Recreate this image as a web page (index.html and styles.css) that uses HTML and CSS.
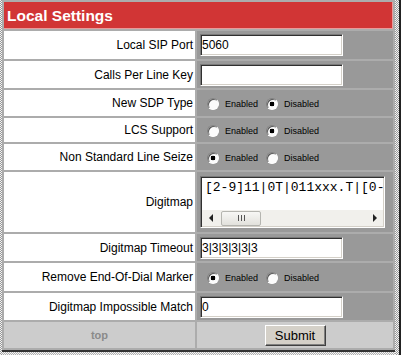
FILE: index.html
```html
<!DOCTYPE html>
<html>
<head>
<meta charset="utf-8">
<title>Local Settings</title>
<link rel="stylesheet" href="styles.css">
</head>
<body>
<div class="frame">
  <div class="edge-l"></div>
  <div class="main">
    <table class="settings">
      <colgroup><col class="c-lbl"><col class="c-val"></colgroup>
      <tr class="h27"><th colspan="2" class="head">Local Settings</th></tr>
      <tr class="h28"><td class="lbl">Local SIP Port</td><td class="val"><input class="txt" type="text" value="5060"></td></tr>
      <tr class="h27"><td class="lbl">Calls Per Line Key</td><td class="val"><input class="txt" type="text" value=""></td></tr>
      <tr class="h26"><td class="lbl">New SDP Type</td><td class="val"><label class="opt"><input class="rb" type="radio" name="sdp">Enabled</label><label class="opt"><input class="rb" type="radio" name="sdp" checked>Disabled</label></td></tr>
      <tr class="h24"><td class="lbl">LCS Support</td><td class="val"><label class="opt"><input class="rb" type="radio" name="lcs">Enabled</label><label class="opt"><input class="rb" type="radio" name="lcs" checked>Disabled</label></td></tr>
      <tr class="h26"><td class="lbl">Non Standard Line Seize</td><td class="val"><label class="opt"><input class="rb" type="radio" name="nsl" checked>Enabled</label><label class="opt"><input class="rb" type="radio" name="nsl">Disabled</label></td></tr>
      <tr class="h60"><td class="lbl">Digitmap</td><td class="val">
        <div class="ta">
          <div class="ta-text">[2-9]11|0T|011xxx.T|[0-</div>
          <div class="sb">
            <span class="sb-btn"><span class="tri-l"></span></span>
            <span class="sb-thumb"><span class="grip"></span><span class="grip"></span><span class="grip"></span></span>
            <span class="sb-track"></span>
            <span class="sb-btn"><span class="tri-r"></span></span>
          </div>
        </div>
      </td></tr>
      <tr class="h27"><td class="lbl">Digitmap Timeout</td><td class="val"><input class="txt" type="text" value="3|3|3|3|3|3"></td></tr>
      <tr class="h28"><td class="lbl">Remove End-Of-Dial Marker</td><td class="val"><label class="opt"><input class="rb" type="radio" name="eod" checked>Enabled</label><label class="opt"><input class="rb" type="radio" name="eod">Disabled</label></td></tr>
      <tr class="h27"><td class="lbl">Digitmap Impossible Match</td><td class="val"><input class="txt" type="text" value="0"></td></tr>
      <tr class="h26 foot"><td class="top">top</td><td class="val center"><button class="btn" type="button">Submit</button></td></tr>
    </table>
    <div class="foot-line"></div>
  </div>
  <div class="edge-r"></div>
  <div class="edge-k"></div>
</div>
</body>
</html>
```
FILE: styles.css
```css
html, body {
  margin: 0;
  padding: 0;
  background: #fff;
}
body {
  font-family: "Liberation Sans", Arial, sans-serif;
  font-size: 12px;
  color: #000;
}
.frame {
  display: flex;
  width: 402px;
  height: 355px;
  overflow: hidden;
}
.edge-l {
  width: 2px;
  background: repeating-conic-gradient(#9a9a9a 0 25%, #f4f4f4 0 50%) 0 0 / 2px 2px;
}
.edge-r {
  width: 4px;
  background: repeating-conic-gradient(#9a9a9a 0 25%, #f4f4f4 0 50%) 0 0 / 2px 2px;
}
.edge-k {
  width: 2px;
  background: #222;
}
.main {
  width: 393px;
  background: repeating-conic-gradient(#b0b0b0 0 25%, #f4f4f4 0 50%) 0 0 / 2px 2px;
}
.settings {
  width: 393px;
  table-layout: fixed;
  border-collapse: separate;
  border-spacing: 2px;
  background: #acacac;
}
.c-lbl { width: 191px; }
.c-val { width: 196px; }
.settings td, .settings th {
  padding: 0;
}
.h24 > td, .h24 > th { height: 24px; }
.h26 > td, .h26 > th { height: 26px; }
.h27 > td, .h27 > th { height: 27px; }
.h28 > td, .h28 > th { height: 28px; }
.h60 > td, .h60 > th { height: 60px; }
.head {
  background: #d13535;
  color: #fff;
  font-weight: bold;
  font-size: 15.5px;
  text-align: left;
  padding-left: 3px !important;
  box-shadow: inset 0 -1px 0 #e99a9a, inset -1px 0 0 #e99a9a;
}
.lbl {
  background: #fff;
  text-align: right;
  padding-right: 2px !important;
  white-space: nowrap;
  vertical-align: middle;
}
.val {
  background: #999999;
  padding-left: 3px !important;
  vertical-align: middle;
}
.center {
  text-align: center;
  padding-left: 0 !important;
}
.foot > td {
  background: #cccccc;
}
.top {
  text-align: center;
  font-weight: bold;
  font-size: 11px;
  color: #8a8a8a;
}
.foot-line {
  height: 2px;
  background: #333;
}
.txt {
  box-sizing: border-box;
  width: 143px;
  height: 22px;
  margin: 0;
  padding: 0 1px;
  font-family: "Liberation Sans", Arial, sans-serif;
  font-size: 12px;
  color: #000;
  background: #fff;
  border: 1px solid;
  border-color: #7a7a7a #ffffff #ffffff #7a7a7a;
  box-shadow: inset 1px 1px 0 #303030, inset -1px -1px 0 #d4d0c8;
  outline: none;
  vertical-align: middle;
}
.opt {
  display: inline-flex;
  align-items: center;
  font-size: 9px;
  color: #000;
  margin-left: 7px;
  margin-right: 8px;
  vertical-align: middle;
}
.opt + .opt {
  margin-left: 0;
}
.rb {
  appearance: none;
  -webkit-appearance: none;
  box-sizing: border-box;
  width: 12px;
  height: 12px;
  margin: 0 6px 0 0;
  border-radius: 50%;
  border: 1px solid;
  border-color: #808080 #ffffff #ffffff #808080;
  background: #fcfcfc;
  box-shadow: inset 1px 1px 0 #5a5a5a;
}
.rb:checked {
  background: radial-gradient(circle at 50% 50%, #000 0 2.2px, #fcfcfc 2.6px);
}
.ta {
  box-sizing: border-box;
  width: 185px;
  height: 52px;
  display: flex;
  flex-direction: column;
  background: #fff;
  border: 1px solid;
  border-color: #7a7a7a #ffffff #ffffff #7a7a7a;
  box-shadow: inset 1px 1px 0 #303030, inset -1px -1px 0 #d4d0c8;
  padding: 1px;
}
.ta-text {
  flex: 1;
  font-family: "Liberation Mono", "Courier New", monospace;
  font-size: 13px;
  line-height: 15px;
  padding: 2px 0 0 3px;
  white-space: nowrap;
}
.sb {
  height: 16px;
  display: flex;
  align-items: center;
  background: #f1f0ec;
}
.sb-btn {
  width: 17px;
  height: 16px;
  display: flex;
  align-items: center;
  justify-content: center;
}
.tri-l {
  width: 0;
  height: 0;
  border-top: 4px solid transparent;
  border-bottom: 4px solid transparent;
  border-right: 4px solid #222;
}
.tri-r {
  width: 0;
  height: 0;
  border-top: 4px solid transparent;
  border-bottom: 4px solid transparent;
  border-left: 4px solid #222;
}
.sb-thumb {
  box-sizing: border-box;
  width: 40px;
  height: 15px;
  margin-left: 2px;
  border: 1px solid #b5b5b0;
  border-radius: 2px;
  background: linear-gradient(#f7f7f5, #e2e1dc);
  display: flex;
  align-items: center;
  justify-content: center;
  gap: 2px;
}
.grip {
  width: 1px;
  height: 6px;
  background: #555;
}
.sb-track {
  flex: 1;
}
.btn {
  box-sizing: border-box;
  width: 61px;
  height: 21px;
  margin: 0;
  padding: 0;
  font-family: "Liberation Sans", Arial, sans-serif;
  font-size: 13px;
  color: #000;
  background: #d4d0c8;
  border: 1px solid;
  border-color: #ffffff #404040 #404040 #ffffff;
  box-shadow: inset -1px -1px 0 #808080;
  vertical-align: middle;
}
```
